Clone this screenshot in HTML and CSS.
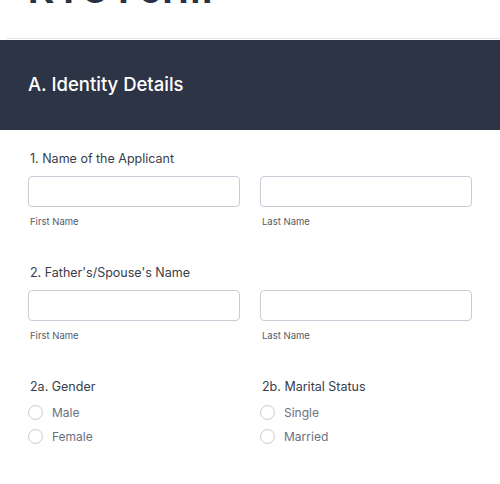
FILE: index.html
```html
<!DOCTYPE html>
<html>
<head>
<meta charset="utf-8">
<link rel="stylesheet" href="styles.css">
</head>
<body>
<div class="top">
  <h1 class="title">KYC Form</h1>
</div>
<div class="rule"></div>
<div class="section-head">
  <h2>A. Identity Details</h2>
</div>
<div class="form">
  <div class="field">
    <div class="label">1. Name of the Applicant</div>
    <div class="cols">
      <div class="col">
        <div class="input"></div>
        <div class="sub">First Name</div>
      </div>
      <div class="col">
        <div class="input"></div>
        <div class="sub">Last Name</div>
      </div>
    </div>
  </div>
  <div class="field">
    <div class="label">2. Father's/Spouse's Name</div>
    <div class="cols">
      <div class="col">
        <div class="input"></div>
        <div class="sub">First Name</div>
      </div>
      <div class="col">
        <div class="input"></div>
        <div class="sub">Last Name</div>
      </div>
    </div>
  </div>
  <div class="field cols">
    <div class="col">
      <div class="label">2a. Gender</div>
      <div class="radios">
        <div class="radio"><span class="circle"></span><span>Male</span></div>
        <div class="radio"><span class="circle"></span><span>Female</span></div>
      </div>
    </div>
    <div class="col">
      <div class="label">2b. Marital Status</div>
      <div class="radios">
        <div class="radio"><span class="circle"></span><span>Single</span></div>
        <div class="radio"><span class="circle"></span><span>Married</span></div>
      </div>
    </div>
  </div>
</div>
</body>
</html>
```
FILE: styles.css
```css
html, body {
  margin: 0;
  padding: 0;
  background: #ffffff;
  font-family: Inter, "Noto Sans", sans-serif;
}
.top {
  height: 38px;
  overflow: hidden;
}
.title {
  margin: -32px 0 0 28px;
  font-size: 37px;
  line-height: 44px;
  font-weight: 700;
  letter-spacing: 0.5px;
  color: #2a3144;
}
.rule {
  height: 1px;
  margin-left: 6px;
  background: #e4e5ea;
  margin-bottom: 1px;
}
.section-head {
  height: 90px;
  box-sizing: border-box;
  padding: 0 28px 3px;
  background: #2d3446;
  display: flex;
  align-items: center;
}
.section-head h2 {
  margin: 0;
  color: #ffffff;
  font-size: 18.5px;
  font-weight: 500;
  line-height: 24px;
}
.form {
  padding: 21px 28px 0;
}
.field {
  margin-bottom: 36px;
}
.cols {
  display: grid;
  grid-template-columns: 1fr 1fr;
  column-gap: 20px;
}
.label {
  font-size: 12.5px;
  line-height: 16px;
  color: #383d4a;
  padding-left: 2px;
  margin-bottom: 9px;
}
.input {
  height: 29px;
  border: 1px solid #c9cbd6;
  border-radius: 4px;
  background: #ffffff;
}
.sub {
  margin-top: 8px;
  font-size: 9.5px;
  line-height: 14px;
  color: #555b66;
  padding-left: 2px;
}
.radios {
  margin-top: -4px;
  display: flex;
  flex-direction: column;
}
.radio {
  height: 24px;
  display: flex;
  align-items: center;
  gap: 9px;
  font-size: 12px;
  color: #6b7080;
}
.circle {
  width: 13px;
  height: 13px;
  border: 1px solid #c9cbd6;
  border-radius: 50%;
  box-sizing: content-box;
}
```
